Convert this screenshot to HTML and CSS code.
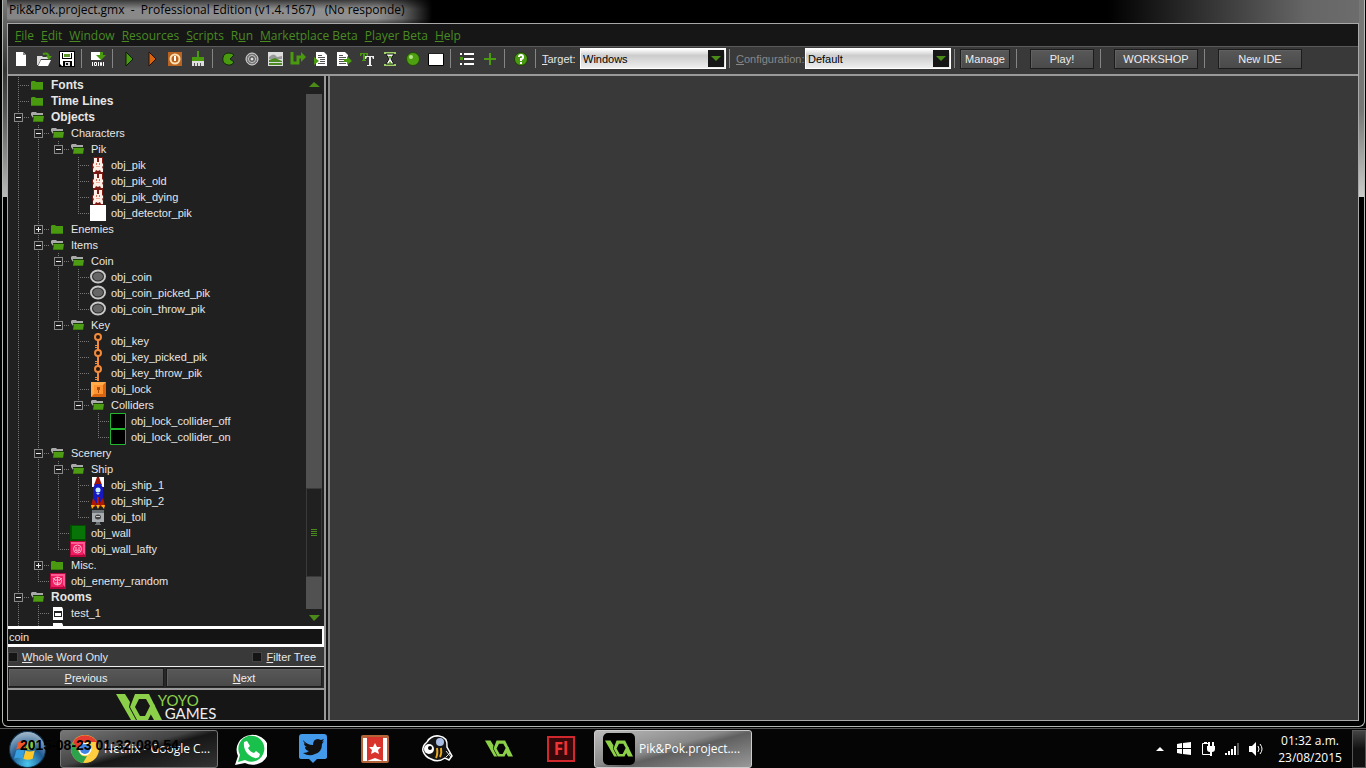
FILE: index.html
```html
<!DOCTYPE html>
<html lang="en">
<head>
<meta charset="utf-8">
<title>Pik&amp;Pok.project.gmx</title>
<link rel="stylesheet" href="styles.css">
</head>
<body>
<svg class="sprites" aria-hidden="true">
  <symbol id="closed" viewBox="0 0 16 16"><path fill="#4a9a10" d="M1 5l1-1h3l1 1h7v8H1z"/><path fill="#3a7a0c" d="M1 12h12v1H1z"/></symbol>
  <symbol id="open" viewBox="0 0 16 16"><path fill="#aaa" d="M1 4l1-1h4l1 1h6v2H4L3 9 1 6z"/><path fill="#1c3c08" d="M3 6h10v1H3z"/><path fill="#4c9c14" d="M4 7h10l-1 6H3z"/><path fill="#3a7a0c" d="M3 12h10v1H3z"/></symbol>
  <symbol id="pik" viewBox="0 0 16 16"><path fill="#7a1a12" d="M3 0h10v5l1 3-1 8H3L2 8l1-3z"/><path fill="#fdeee6" d="M4 1h3v4h2V1h3v5l1 1v2l-1 1 1 2v3h-2l-1-2-2 1-2-1-1 2H3v-3l1-2-1-1V7l1-1z"/><path fill="#d8705c" d="M6 6h1v2H6zM9 6h1v2H9z"/><path fill="#f0b09c" d="M6 9h4v1H6z"/></symbol>
  <symbol id="white" viewBox="0 0 16 16"><path fill="#fff" d="M0 0h16v16H0z"/></symbol>
  <symbol id="coin" viewBox="0 0 16 16"><ellipse cx="8" cy="7.500" rx="7" ry="6" fill="#2a2a2a" stroke="#c8c8c8" stroke-width="2"/><ellipse cx="8" cy="7.500" rx="5" ry="4" fill="#666"/></symbol>
  <symbol id="key" viewBox="0 0 16 16"><circle cx="8" cy="4" r="3" fill="#2b170c" stroke="#f08a3c" stroke-width="2"/><path stroke="#f08a3c" stroke-width="2" d="M8 0v2M8 7v9"/><path stroke="#f08a3c" d="M5 12.500h3M5 14.500h3"/></symbol>
  <symbol id="lock" viewBox="0 0 16 16"><path fill="#ffab4a" d="M1 1h15v15H1z"/><path fill="#d96510" d="M16 1v15H1l3-3h9V4z"/><path fill="#ff9430" d="M4 4h9v9H4z"/><path fill="#a84b0a" d="M7 6h3v3H9v3H8V9H7z"/></symbol>
  <symbol id="collider" viewBox="0 0 16 16"><path fill="#000" stroke="#20b82c" d="M.5.500h15v15H.5z"/></symbol>
  <symbol id="ship1" viewBox="0 0 16 16"><path fill="#fff" d="M2 0h12v10H2z"/><path fill="#a01408" d="M7 0h2l3 8H4z"/><path fill="#1818c0" d="M5 7h6l2 4v5H3v-5z"/><circle cx="8" cy="13" r="2.500" fill="#c8f0ff"/></symbol>
  <symbol id="ship2" viewBox="0 0 16 16"><path fill="#1818c0" d="M3 0h10v6l-2 4H5L3 6z"/><path fill="#a8dff8" d="M6 0h4l-2 2z"/><path fill="#b01808" d="M7 4h2v9H7zM3 5l4 6-2 3H1l1-5zM13 5l-4 6 2 3h4l-1-5z"/><path fill="#ffb010" d="M1 12h4l-3 4zM6 12h4l-2 4zM11 12h4l-1 4z"/></symbol>
  <symbol id="toll" viewBox="0 0 16 16"><path fill="#a8adb2" d="M2 1h12v12H2z"/><path fill="#6c7175" d="M2 1h12v3H2zM6 13h4v2H6zM5 15h6v1H5z"/><ellipse cx="8" cy="8" rx="3" ry="2.500" fill="#444"/><path fill="#ccc" d="M6 7h4v1H6z"/></symbol>
  <symbol id="wall" viewBox="0 0 16 16"><path fill="#034d03" d="M0 0h16v16H0z"/><path fill="#087408" d="M2 1h13v13H2z"/></symbol>
  <symbol id="lafty" viewBox="0 0 16 16"><path fill="#b3083e" d="M0 0h16v16H0z"/><path fill="#ff5a94" d="M1 1h14v13l-2-2V3H1z"/><path fill="#f01c62" d="M1 3h12v11H1z"/><g fill="none" stroke="#ffb2cc"><circle cx="7.500" cy="8" r="4"/><path d="M5 9q2.500 3 5 0zM5 7h2M8 7h2"/></g></symbol>
  <symbol id="enemy" viewBox="0 0 16 16"><path fill="#b3083e" d="M0 0h16v16H0z"/><path fill="#ff5a94" d="M1 1h14v13l-2-2V3H1z"/><path fill="#f01c62" d="M1 3h12v11H1z"/><g fill="none" stroke="#ffb2cc"><circle cx="7.500" cy="8" r="4"/><path d="M3 5l3 3M12 5L9 8M7.500 4v8M5 10h5M5 7h5"/></g></symbol>
  <symbol id="room" viewBox="0 0 16 16"><path fill="#fff" d="M3 2h9l1 2v11H3z"/><path fill="#222" d="M4 6h8v6H4z"/><path fill="#fff" d="M5 8h6v3H5z"/></symbol>
  <symbol id="yoyo" viewBox="0 0 46 26"><g fill="#8bd048"><path d="M0 0h9l5 8-1 5 7 13h-5z"/><path fill-rule="evenodd" d="M19 0h14l6 12-7 14H21l-7-13zM23 5l-4 8 5 9h5l5-10-4-7z"/><path d="M38 10l8 16h-8l-4-7z"/></g></symbol>
</svg>

<main class="window">
  <header class="title">Pik&amp;Pok.project.gmx  -  Professional Edition (v1.4.1567)   (No responde)</header>
  <div class="client">
    <nav class="menu">
      <button><u>F</u>ile</button><button><u>E</u>dit</button><button><u>W</u>indow</button><button><u>R</u>esources</button><button><u>S</u>cripts</button><button>R<u>u</u>n</button><button><u>M</u>arketplace Beta</button><button><u>P</u>layer Beta</button><button><u>H</u>elp</button>
    </nav>
    <div class="toolbar">
      <button class="tool" aria-label="New"><svg viewBox="0 0 16 16"><path fill="#fff" d="M3 1h7l3 3v11H3z"/><path fill="#888" d="M10 1v3h3z"/></svg></button>
      <button class="tool" aria-label="Open"><svg viewBox="0 0 16 16"><path fill="#ddd" d="M1 5h5l1 1h5v2H5l-3 6H1z"/><path fill="#fff" d="M5 9h10l-3 6H2z"/><path fill="none" stroke="#4a9a10" stroke-width="2" d="M7 3q5-2 6 3"/><path fill="#4a9a10" d="M10 5h6l-3 4z"/></svg></button>
      <button class="tool" aria-label="Save"><svg viewBox="0 0 16 16"><path fill="#000" d="M0 0h16v16H0z"/><path fill="#fff" d="M1 1h14v14H3l-2-2z"/><path fill="#000" d="M3 2h10v6H3zM4 10h9v5H4z"/><path fill="#fff" d="M4 2h8v5H4z"/><path fill="#5a9a28" d="M5 3h6v3H5z"/><path fill="#ddd" d="M6 11h5v4H6z"/><path fill="#111" d="M7 12h2v2H7z"/></svg></button>
      <span class="sep"></span>
      <button class="tool" aria-label="Create executable"><svg viewBox="0 0 16 16"><path fill="#fff" d="M1 1h10v8H1z"/><path fill="#4a9a10" d="M6 4h4V1h3v3h3l-5 5z"/><path stroke="#fff" fill="none" d="M2.500 11v4M13.500 11v4M8.500 11v4M4.500 11.500h2v3h-2zM10.500 11.500h1v3h-1z"/></svg></button>
      <span class="sep"></span>
      <button class="tool" aria-label="Run"><svg viewBox="0 0 16 16"><path fill="#4a9a10" stroke="#0c1c02" d="M5 1l7 7-7 7z"/></svg></button>
      <button class="tool" aria-label="Debug"><svg viewBox="0 0 16 16"><path fill="#d86410" stroke="#2a1202" d="M5 1l7 7-7 7z"/></svg></button>
      <button class="tool" aria-label="Stop"><svg viewBox="0 0 16 16"><path fill="#b86420" d="M1 1h14v14H1z"/><circle cx="8" cy="8" r="4.500" fill="none" stroke="#ffe0b0" stroke-width="2"/><path fill="#fff" d="M7 5h2v5H7z"/></svg></button>
      <button class="tool" aria-label="Clean"><svg viewBox="0 0 16 16"><path fill="#4a9a10" d="M7 0h2v6h5v4H2V6h5z"/><path fill="#ddd" d="M2 10h12v5H2z"/><path stroke="#555" d="M4.500 12v3M7.500 12v3M10.500 12v3"/></svg></button>
      <span class="sep"></span>
      <button class="tool" aria-label="Sprite"><svg viewBox="0 0 16 16"><path fill="#4a9a10" stroke="#10260a" d="M8 2a6 6 0 1 0 5 9L9 8l4-4q-2-2-5-2z"/></svg></button>
      <button class="tool" aria-label="Sound"><svg viewBox="0 0 16 16"><circle cx="8" cy="8" r="6" fill="#777" stroke="#ddd"/><circle cx="8" cy="8" r="3.500" fill="#555" stroke="#ccc"/><circle cx="8" cy="8" r="1.500" fill="#ddd"/></svg></button>
      <button class="tool" aria-label="Background"><svg viewBox="0 0 16 16"><path fill="#ddd" d="M1 1h15v14H1z"/><path fill="#999" d="M2 6q5-5 8 0l5-1v3H2z"/><path fill="#4a8a20" d="M2 9l6-2 7 3v1H2zM2 12h13v2H2z"/></svg></button>
      <button class="tool" aria-label="Path"><svg viewBox="0 0 16 16"><path fill="none" stroke="#4a9a10" stroke-width="3" d="M2 1v11h6V6h5"/><path fill="#4a9a10" d="M11 1l5 5-5 5z"/></svg></button>
      <button class="tool" aria-label="Script"><svg viewBox="0 0 16 16"><path fill="#fff" d="M3 1h8l3 3v11H3z"/><path stroke="#555" d="M5 4.500h4M5 6.500h7M7 8.500h5M7 10.500h5M5 12.500h7"/><path fill="#4a9a10" d="M1 6l5 4-5 4z"/></svg></button>
      <button class="tool" aria-label="Shader"><svg viewBox="0 0 16 16"><path fill="#fff" d="M1 1h8l3 3v11H1z"/><path stroke="#555" d="M3 4.500h4M3 6.500h7M3 8.500h5M3 10.500h5M3 12.500h7"/><path fill="#4a9a10" d="M8 8h3V5l5 5-5 4v-3H8z"/></svg></button>
      <button class="tool" aria-label="Font"><svg viewBox="0 0 16 16"><path fill="#4a9a10" d="M1 2h8v3H8L7 3H6v6h1v1H3V9h1V3H3L2 5H1z"/><path fill="#eee" d="M6 5h9v3h-1l-1-2h-1v8h1v1H8v-1h2V6H8L7 8H6z"/></svg></button>
      <button class="tool" aria-label="Time line"><svg viewBox="0 0 16 16"><path fill="#9fd06a" d="M2 1h12v2H2zM2 13h12v2H2z"/><path fill="#fff" stroke="#111" d="M4 3h8l-3 5 3 5H4l3-5z"/><path fill="#579b28" d="M6 5h4L8 8zM8 10l2 3H6z"/></svg></button>
      <button class="tool" aria-label="Object"><svg viewBox="0 0 16 16"><circle cx="8" cy="8" r="6.500" fill="#4fa010" stroke="#1f4a06"/><circle cx="6" cy="6" r="2" fill="#b4e48a"/></svg></button>
      <button class="tool" aria-label="Room"><svg viewBox="0 0 16 16"><path fill="#fff" stroke="#000" d="M.5 2.500h15v12H.5z"/><path fill="#222" d="M1 2h14v1H1z"/></svg></button>
      <span class="sep"></span>
      <button class="tool" aria-label="Game information"><svg viewBox="0 0 16 16"><path fill="#fff" d="M5 2h10v2H5zM5 7h10v2H5zM5 12h10v2H5zM1 2h2v2H1zM1 12h2v2H1z"/><path fill="#4a9a10" d="M1 6h3v3H1z"/></svg></button>
      <button class="tool" aria-label="Add"><svg viewBox="0 0 16 16"><path fill="#4a9a10" d="M7 2h2v5h5v2H9v5H7V9H2V7h5z"/></svg></button>
      <span class="sep"></span>
      <button class="tool" aria-label="Help"><svg viewBox="0 0 16 16"><circle cx="8" cy="8" r="6.500" fill="#4a9a10" stroke="#1d4006"/><path fill="none" stroke="#fff" stroke-width="2" d="M6 6q0-2 2-2t2 2-2 2v2M8 11v2"/></svg></button>
      <span class="sep"></span>
      <label for="target"><u>T</u>arget:</label>
      <span class="combo"><select id="target"><option>Windows</option></select><svg viewBox="0 0 16 17"><path fill="#4a8a18" d="M3 6h10l-5 5z"/></svg></span>
      <span class="sep"></span>
      <label for="config" class="dim"><u>C</u>onfiguration:</label>
      <span class="combo"><select id="config"><option>Default</option></select><svg viewBox="0 0 16 17"><path fill="#4a8a18" d="M3 6h10l-5 5z"/></svg></span>
      <span class="sep"></span>
      <button class="push small">Manage</button><span class="sep wide"></span>
      <button class="push medium">Play!</button><span class="sep wide"></span>
      <button class="push">WORKSHOP</button><span class="sep wide"></span>
      <button class="push">New IDE</button>
    </div>
    <div class="body">
      <aside class="side">
        <div class="treebox">
          <ul class="tree">
            <li><div class="row leaf"><svg><use href="#closed"/></svg><b>Fonts</b></div></li>
            <li><div class="row leaf"><svg><use href="#closed"/></svg><b>Time Lines</b></div></li>
            <li><div class="row"><button class="exp" aria-label="Collapse Objects"></button><svg><use href="#open"/></svg><b>Objects</b></div>
              <ul>
                <li><div class="row"><button class="exp" aria-label="Collapse Characters"></button><svg><use href="#open"/></svg>Characters</div>
                  <ul>
                    <li><div class="row"><button class="exp" aria-label="Collapse Pik"></button><svg><use href="#open"/></svg>Pik</div>
                      <ul>
                        <li><div class="row leaf"><svg><use href="#pik"/></svg>obj_pik</div></li>
                        <li><div class="row leaf"><svg><use href="#pik"/></svg>obj_pik_old</div></li>
                        <li><div class="row leaf"><svg><use href="#pik"/></svg>obj_pik_dying</div></li>
                        <li><div class="row leaf"><svg><use href="#white"/></svg>obj_detector_pik</div></li>
                      </ul></li>
                  </ul></li>
                <li><div class="row"><button class="exp plus" aria-label="Expand Enemies"></button><svg><use href="#closed"/></svg>Enemies</div></li>
                <li><div class="row"><button class="exp" aria-label="Collapse Items"></button><svg><use href="#open"/></svg>Items</div>
                  <ul>
                    <li><div class="row"><button class="exp" aria-label="Collapse Coin"></button><svg><use href="#open"/></svg>Coin</div>
                      <ul>
                        <li><div class="row leaf"><svg><use href="#coin"/></svg>obj_coin</div></li>
                        <li><div class="row leaf"><svg><use href="#coin"/></svg>obj_coin_picked_pik</div></li>
                        <li><div class="row leaf"><svg><use href="#coin"/></svg>obj_coin_throw_pik</div></li>
                      </ul></li>
                    <li><div class="row"><button class="exp" aria-label="Collapse Key"></button><svg><use href="#open"/></svg>Key</div>
                      <ul>
                        <li><div class="row leaf"><svg><use href="#key"/></svg>obj_key</div></li>
                        <li><div class="row leaf"><svg><use href="#key"/></svg>obj_key_picked_pik</div></li>
                        <li><div class="row leaf"><svg><use href="#key"/></svg>obj_key_throw_pik</div></li>
                        <li><div class="row leaf"><svg><use href="#lock"/></svg>obj_lock</div></li>
                        <li><div class="row"><button class="exp" aria-label="Collapse Colliders"></button><svg><use href="#open"/></svg>Colliders</div>
                          <ul>
                            <li><div class="row leaf"><svg><use href="#collider"/></svg>obj_lock_collider_off</div></li>
                            <li><div class="row leaf"><svg><use href="#collider"/></svg>obj_lock_collider_on</div></li>
                          </ul></li>
                      </ul></li>
                  </ul></li>
                <li><div class="row"><button class="exp" aria-label="Collapse Scenery"></button><svg><use href="#open"/></svg>Scenery</div>
                  <ul>
                    <li><div class="row"><button class="exp" aria-label="Collapse Ship"></button><svg><use href="#open"/></svg>Ship</div>
                      <ul>
                        <li><div class="row leaf"><svg><use href="#ship1"/></svg>obj_ship_1</div></li>
                        <li><div class="row leaf"><svg><use href="#ship2"/></svg>obj_ship_2</div></li>
                        <li><div class="row leaf"><svg><use href="#toll"/></svg>obj_toll</div></li>
                      </ul></li>
                    <li><div class="row leaf"><svg><use href="#wall"/></svg>obj_wall</div></li>
                    <li><div class="row leaf"><svg><use href="#lafty"/></svg>obj_wall_lafty</div></li>
                  </ul></li>
                <li><div class="row"><button class="exp plus" aria-label="Expand Misc."></button><svg><use href="#closed"/></svg>Misc.</div></li>
                <li><div class="row leaf"><svg><use href="#enemy"/></svg>obj_enemy_random</div></li>
              </ul></li>
            <li class="more"><div class="row"><button class="exp" aria-label="Collapse Rooms"></button><svg><use href="#open"/></svg><b>Rooms</b></div>
              <ul>
                <li><div class="row leaf"><svg><use href="#room"/></svg>test_1</div></li>
                <li class="more"><div class="row leaf"><svg><use href="#room"/></svg></div></li>
              </ul></li>
          </ul>
          <div class="scroll">
            <svg viewBox="0 0 16 17"><path fill="#4a8a18" d="M3 10h11L8 5z"/></svg>
            <span class="track before"></span>
            <span class="thumb"><i></i><i></i><i></i><i></i></span>
            <span class="track after"></span>
            <svg viewBox="0 0 16 17"><path fill="#4a8a18" d="M3 6h11l-6 6z"/></svg>
          </div>
        </div>
        <input class="search" type="text" value="coin" aria-label="Search resources">
        <div class="options">
          <label><input type="checkbox"><span><u>W</u>hole Word Only</span></label>
          <label><input type="checkbox"><span><u>F</u>ilter Tree</span></label>
        </div>
        <div class="steps"><button class="push"><u>P</u>revious</button><button class="push"><u>N</u>ext</button></div>
        <div class="brand"><svg><use href="#yoyo"/></svg><div class="brandname"><span>YOYO</span><span class="games">GAMES</span></div></div>
      </aside>
      <section class="work"></section>
    </div>
  </div>
</main>

<footer class="taskbar">
  <button class="app start" aria-label="Start"><svg viewBox="0 0 36 36"><defs><radialGradient id="orb" cx=".5" cy=".9" r=".9"><stop offset="0" stop-color="#4cc8f0"/><stop offset=".5" stop-color="#1f5c94"/><stop offset="1" stop-color="#a8bccb"/></radialGradient></defs><circle cx="18" cy="18" r="17.500" fill="url(#orb)" stroke="#123450"/><path fill="#f05a28" d="M9 11q4-3 8-1l-2 8q-4-2-8 0z"/><path fill="#8cc63f" d="M18 10q4 2 9-1l-2 8q-4 3-9 1z"/><path fill="#38a0e0" d="M7 19q4-2 8 0l-2 8q-4-2-8 0z"/><path fill="#ffc828" d="M16 19q4 2 9 0l-2 8q-5 2-9 0z"/></svg></button>
  <button class="task"><svg viewBox="0 0 28 28"><circle cx="14" cy="14" r="14" fill="#ffcd40"/><path fill="#e33b2e" d="M2 7a14 14 0 0 1 24 0H14a7 7 0 0 0-6 10z"/><path fill="#2ca24c" d="M2 7l6 10a7 7 0 0 0 8 4l-4 7A14 14 0 0 1 2 7z"/><circle cx="14" cy="14" r="6.500" fill="#fff"/><circle cx="14" cy="14" r="5" fill="#3f82e8"/></svg><span>Netflix - Google C...</span></button>
  <button class="app" aria-label="WhatsApp"><svg viewBox="0 0 32 32"><path fill="#fff" d="M0 32l3-9A16 15 0 1 1 10 30z"/><path fill="#19c04c" d="M3 29l2-7A13 13 0 1 1 10 27z"/><path fill="#fff" d="M9 9l3-1 3 5-2 2q2 4 6 5l2-2 4 3-1 3q-4 3-10-2-6-5-5-13z"/></svg></button>
  <button class="app" aria-label="Twitter"><svg viewBox="0 0 32 32"><path fill="#4399ea" d="M5 1h22q3 0 3 3v20q0 2-3 2h-7l-4 4-4-4H5q-3 0-3-2V4q0-3 3-3z"/><path fill="#111" d="M6 7q4 5 10 5 0-6 5-6l3 1 3-1-2 3 2-1-2 3q0 8-7 10-6 3-12-1 4 0 6-2-4-1-4-4h2q-3-1-3-4l2 1q-3-2-3-4z"/></svg></button>
  <button class="app" aria-label="Wunderlist"><svg viewBox="0 0 32 32"><rect x="2" y="2" width="28" height="28" rx="2" fill="#b5643a"/><path fill="#fff" d="M4 5h24v23H4z"/><path fill="#d9342c" d="M8 4h16v24l-8-3-8 3z"/><path fill="#fff" d="M16 10l2 4h4l-3 3 1 4-4-2-4 2 1-4-3-3h4z"/></svg></button>
  <button class="app" aria-label="Bee"><svg viewBox="0 0 32 32"><path fill="#151515" stroke="#fff" stroke-width="1.500" d="M6 9Q10 2 18 3q9 1 8 11l5 9-3 4-4-2q-7 5-14 1-6-2-8-8-1-5 4-9z"/><circle cx="8" cy="16" r="5" fill="#fff"/><circle cx="9" cy="15" r="2" fill="#000"/><ellipse cx="19" cy="9" rx="4" ry="4" fill="#a8bce4"/><path stroke="#e8a820" stroke-width="2" fill="none" d="M16 15q1 6-1 10M20 15q1 5-1 9"/><path fill="none" stroke="#ddd" d="M25 18l5 6M25 24l5-5"/></svg></button>
  <button class="app yoyo" aria-label="GameMaker"><svg><use href="#yoyo"/></svg></button>
  <button class="app" aria-label="Flash"><span class="flash">Fl</span></button>
  <button class="task active"><span class="gm"><svg><use href="#yoyo"/></svg></span><span>Pik&amp;Pok.project....</span></button>
  <div class="tray">
    <svg viewBox="0 0 16 16"><path fill="#fff" d="M4 10h8L8 6z"/></svg>
    <svg viewBox="0 0 16 16"><path fill="#fff" d="M1 3l5-1v5H1zM7 2l8-1v6H7zM1 8h5v5l-5-1zM7 8h8v6l-8-1z"/></svg>
    <svg viewBox="0 0 16 16"><path fill="none" stroke="#fff" d="M8 2.500H2.500v11h8V12M4 1.500h3"/><path fill="#fff" d="M7 5h8v3q0 3-3 3v4h-2v-4q-3 0-3-3zM8 1h2v4H8zM12 1h2v4h-2z"/></svg>
    <svg viewBox="0 0 16 16"><path fill="#fff" d="M1 12h2v2H1zM4 10h2v4H4zM7 8h2v6H7zM10 5h2v9h-2z"/><path fill="#555" d="M13 2h2v12h-2z"/></svg>
    <svg viewBox="0 0 16 16"><path fill="#fff" d="M1 5h3l4-4v14l-4-4H1z"/><path fill="none" stroke="#fff" d="M10 5q2 3 0 6M12 3q4 5 0 10"/></svg>
  </div>
  <div class="clock"><span>01:32 a.m.</span><span>23/08/2015</span></div>
  <button class="desktop" aria-label="Show desktop"></button>
  <span class="stamp">2015-08-23 01:32:080.54</span>
</footer>
</body>
</html>
```

FILE: styles.css
```css
* { box-sizing: border-box; }
body {
  margin: 0; height: 100vh; overflow: hidden; display: flex; flex-direction: column;
  background: #000; color: #e6e6e6; font: 11px/16px "Liberation Sans", Arial, sans-serif;
}
button, input, select { font: inherit; color: inherit; margin: 0; padding: 0; border: 0; border-radius: 0; background: none; }
svg { display: block; flex: none; }
ul { list-style: none; margin: 0; padding: 0; }
.sprites { position: absolute; width: 0; height: 0; }

.window {
  flex: 1; min-height: 0; display: flex; flex-direction: column;
  margin: 0 1px 1px 2px; padding: 0 5px 5px 4px;
  border: solid #b5bab5; border-width: 0 1px 1px; border-radius: 0 0 6px 6px;
  background:
    linear-gradient(#777 0, #333 70px, #555 110px, #bbb 197px, #000 197px) left / 4px 100% no-repeat,
    linear-gradient(#777, #777 110px, #ccc 197px, #000 197px) right / 5px 100% no-repeat,
    #000;
}
.title {
  height: 23px; padding-left: 2px; font: 12px/20px "Open Sans", "Noto Sans", sans-serif; white-space: pre; color: #000;
  background:
    linear-gradient(#0009, transparent 40% 80%, #0006) left / 430px 100% no-repeat,
    linear-gradient(90deg, #858585, #909090 370px, #666 395px, #000 425px, #000 1100px, #333 1200px, #666 1300px, #6c6c6c);
}
.client { flex: 1; min-height: 0; display: flex; flex-direction: column; border: 1px solid #a9a9a9; background: #161616; }
.menu { display: flex; align-items: flex-end; gap: 7px; height: 23px; padding-left: 7px; border-bottom: 1px solid #5a5a5a; }
.menu button { color: #4a8a22; font: 12px/20px "Open Sans", "Noto Sans", sans-serif; }

.toolbar { display: flex; align-items: center; height: 27px; padding: 0 0 4px 1px; background: #393939; white-space: nowrap; }
.tool { width: 23px; display: grid; place-items: center; }
.tool svg { width: 16px; height: 16px; }
.sep { width: 8px; height: 19px; background: linear-gradient(#858585, #858585) 3px 0 / 1px 100% no-repeat; flex: none; }
.toolbar label { width: 38px; margin-left: 2px; }
.toolbar label.dim { width: 69px; color: #888; }
.combo { display: grid; width: 146px; height: 21px; }
.combo select { grid-area: 1 / 1; appearance: none; width: 100%; padding-left: 2px; border: 1px solid #fff; background: linear-gradient(#fff, #ccc 35%, #eee); color: #000; }
.combo svg { grid-area: 1 / 1; width: 16px; height: 17px; justify-self: end; align-self: center; margin-right: 2px; background: #161616; pointer-events: none; }
.push { width: 84px; height: 20px; border: 1px solid #1c1c1c; outline: 0; background: linear-gradient(#585858, #4a4a4a); box-shadow: inset 1px 1px #606060; color: #eee; line-height: 16px; }
.toolbar .push { margin-right: 3px; }
.toolbar .small { width: 50px; }
.toolbar .medium { width: 64px; }
.sep + .push.small { margin-left: 1px; }
.sep.wide { width: 15px; }
.sep.wide + .push { margin-left: 2px; }

.body { flex: 1; min-height: 0; display: flex; border-top: 2px solid #999; }
.side { width: 318px; flex: none; display: flex; flex-direction: column; border-right: 2px solid #999; }
.treebox { flex: 1; min-height: 0; display: flex; background: #202020; overflow: hidden; padding: 1px 2px 0 0; }
.tree { flex: 1; min-width: 0; }
.tree li { background: repeating-linear-gradient(#777 0 1px, #202020 1px 2px) 10px 0 / 1px 100% no-repeat; }
.tree li:last-child { background-size: 1px 8px; }
.tree li.more { background-size: 1px 100%; }
.tree ul { margin-left: 20px; }
.row { display: flex; align-items: center; height: 16px; white-space: nowrap; background: repeating-linear-gradient(90deg, #777 0 1px, #202020 1px 2px) 10px 8px / 12px 1px no-repeat; }
.row svg { width: 16px; height: 16px; margin: 0 5px 0 2px; }
.leaf { padding-left: 20px; }
.exp {
  width: 9px; height: 9px; margin: 0 5px 0 6px; border: 1px solid #888; flex: none;
  background: linear-gradient(#eee, #eee) center / 5px 1px no-repeat, #202020;
}
.exp.plus { background: linear-gradient(#eee, #eee) center / 5px 1px no-repeat, linear-gradient(#eee, #eee) center / 1px 5px no-repeat, #202020; }
.row b { font-size: 12px; }
.scroll { width: 16px; display: flex; flex-direction: column; flex: none; }
.scroll svg { width: 16px; height: 17px; }
.track { background: #515151; }
.before { flex: 395; }
.after { flex: 32; }
.thumb { flex: 87; display: flex; flex-direction: column; justify-content: center; align-items: center; gap: 1px; background: #202020; border: 1px solid #3a3a3a; }
.thumb i { width: 6px; height: 1px; background: #4a8a18; }

.search { width: 100%; height: 21px; padding: 0 1px; border: solid #fff; border-width: 3px 2px 3px 0; background: #141414; outline: 0; }
.options { display: flex; justify-content: space-between; align-items: center; height: 19px; padding-right: 8px; background: #393939; }
.options label { display: flex; align-items: center; gap: 4px; }
.options input { appearance: none; width: 10px; height: 10px; background: #151515; border: 1px solid #444; }
.steps { display: flex; gap: 2px; padding: 1px 2px 1px 0; border-top: 1px solid #eee; border-bottom: 2px solid #999; background: #282828; }
.steps .push { flex: 1; height: 19px; }
.brand { display: flex; justify-content: center; height: 30px; padding-top: 4px; overflow: hidden; }
.brand svg { width: 46px; height: 26px; }
.brandname { display: flex; flex-direction: column; margin-left: -4px; font: 15px/13px Lato, sans-serif; color: #8bd048; }
.games { padding-left: 7px; color: #eee; }
.work { flex: 1; margin-left: 2px; border-left: 2px solid #888; background: #393939; }

.taskbar { position: relative; display: flex; align-items: center; height: 40px; border-top: 1px solid #555; background: #050505; font: 12px/17px "Open Sans", "Noto Sans", sans-serif; color: #fff; }
.app { width: 62px; height: 36px; display: grid; place-items: center; flex: none; }
.app svg { width: 32px; height: 32px; }
.app.start { width: 54px; margin-right: 6px; }
.start svg { width: 37px; height: 37px; }
.app.yoyo svg, .gm svg { width: 28px; height: 17px; }
.task { display: flex; align-items: center; gap: 5px; width: 158px; height: 38px; padding: 0 0 0 10px; border: 1px solid #777; border-radius: 3px; white-space: nowrap; background: linear-gradient(165deg, #777, #444 45%, #161616 55%, #333); }
.task + .app { margin-left: 2px; }
.task svg { width: 28px; height: 28px; }
.task.active { margin-left: 2px; padding-left: 8px; gap: 4px; border-color: #ccc; background: linear-gradient(165deg, #bbb, #888 45%, #606060 55%, #999); }
.gm { width: 32px; height: 32px; border-radius: 5px; background: #000; display: grid; place-items: center; }
.task .gm svg { width: 28px; height: 17px; }
.flash { width: 28px; height: 26px; border: 2px solid #d0282c; background: #36080a; color: #f03436; font: bold 17px/22px "Open Sans", sans-serif; }
.tray { display: flex; gap: 8px; margin-left: auto; margin-right: 15px; }
.tray svg { width: 16px; height: 16px; }
.clock { display: flex; flex-direction: column; align-items: center; width: 62px; margin-right: 11px; }
.desktop { width: 14px; height: 38px; border: 1px solid #555; background: linear-gradient(#444, #111 50%); }
.stamp { position: absolute; left: 20px; top: 8px; font: bold 14px/17px "Liberation Sans", sans-serif; color: #000; white-space: pre; }
```
